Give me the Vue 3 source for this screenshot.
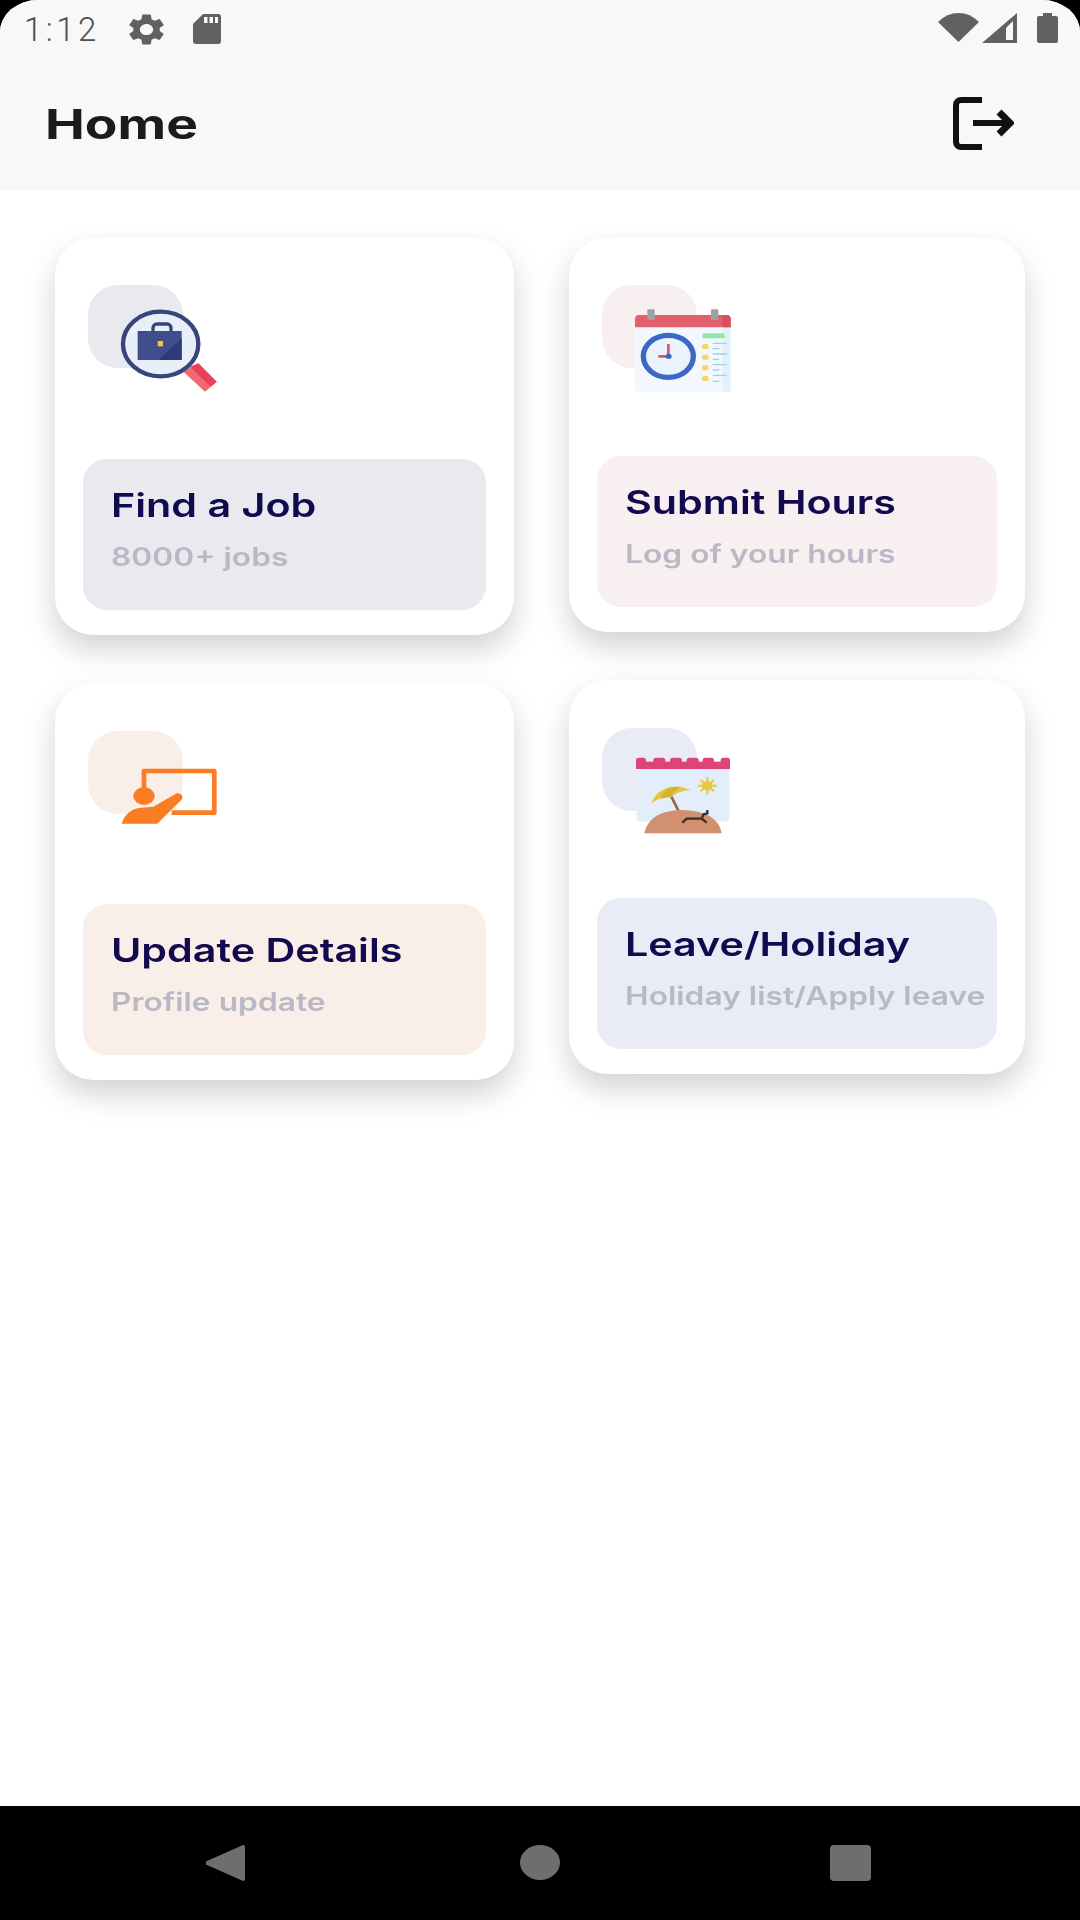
<template>
  <div class="screen">
    <div class="main">
      <div class="top-area">
        <div class="status-bar">
          <span class="time">1:12</span>
          <svg class="ic-gear" viewBox="2.5 2 19 20" preserveAspectRatio="none"><path d="M19.14 12.94c.04-.3.06-.61.06-.94 0-.32-.02-.64-.07-.94l2.03-1.58c.18-.14.23-.41.12-.61l-1.92-3.32c-.12-.22-.37-.29-.59-.22l-2.39.96c-.5-.38-1.03-.7-1.62-.94l-.36-2.54c-.04-.24-.24-.41-.48-.41h-3.84c-.24 0-.43.17-.47.41l-.36 2.54c-.59.24-1.13.57-1.62.94l-2.39-.96c-.22-.08-.47 0-.59.22L2.74 8.87c-.12.21-.08.47.12.61l2.03 1.58c-.05.3-.09.63-.09.94s.02.64.07.94l-2.03 1.58c-.18.14-.23.41-.12.61l1.92 3.32c.12.22.37.29.59.22l2.39-.96c.5.38 1.03.7 1.62.94l.36 2.54c.05.24.24.41.48.41h3.84c.24 0 .44-.17.47-.41l.36-2.54c.59-.24 1.13-.56 1.62-.94l2.39.96c.22.08.47 0 .59-.22l1.92-3.32c.12-.22.07-.47-.12-.61l-2.01-1.58zM12 15.6c-1.98 0-3.6-1.62-3.6-3.6s1.62-3.6 3.6-3.6 3.6 1.62 3.6 3.6-1.62 3.6-3.6 3.6z" fill="#616161"/></svg>
          <svg class="ic-sd" viewBox="0 0 28 30"><path d="M10 0H25a3 3 0 0 1 3 3V27a3 3 0 0 1-3 3H3a3 3 0 0 1-3-3V10Z" fill="#616161"/><path d="M11 3h3.500v6H11zM16.500 3H20v6h-3.500zM22 3h3v6h-3z" fill="#f8f8f8"/></svg>
          <span class="spacer"></span>
          <svg class="ic-wifi" viewBox="0 0 41 29"><path d="M20.500 29L0 9Q9 0 20.500 0T41 9Z" fill="#616161"/></svg>
          <svg class="ic-signal" viewBox="0 0 35 30"><path d="M35 0V30H0Z" fill="#616161"/><path d="M24 15L31 8V27H24Z" fill="#f8f8f8"/></svg>
          <svg class="ic-battery" viewBox="0 0 21 30"><path d="M6 0H15V3H19a2 2 0 0 1 2 2V28a2 2 0 0 1-2 2H2a2 2 0 0 1-2-2V5a2 2 0 0 1 2-2H6Z" fill="#616161"/></svg>
        </div>
        <div class="toolbar">
          <span class="title">Home</span>
          <svg class="ic-logout" viewBox="0 0 62 55" fill="none" stroke="#111" stroke-width="6">
            <path d="M30 3H9a5 5 0 0 0-5 5V45a5 5 0 0 0 5 5H30"/>
            <path d="M21 26H56"/>
            <path d="M47 15L58 26L47 37" stroke-width="7"/>
          </svg>
        </div>
      </div>

      <div class="columns">
        <div v-for="(col, i) in columns" :key="i" class="column" :class="'column-' + i">
          <div v-for="item in col" :key="item.title" class="card" :class="item.kind">
            <div class="head">
              <div class="tile"></div>

              <svg v-if="item.kind === 'job'" class="art" viewBox="0 0 510 420">
                <path d="M340 305L385 280L440 335L405 365Z" fill="#f26a6e"/>
                <path d="M360 290L385 280L440 335L422 350Z" fill="#e6435a"/>
                <ellipse cx="272" cy="222" rx="113" ry="97" fill="#e9eff9" stroke="#39437c" stroke-width="13"/>
                <rect x="249" y="162" width="54" height="34" rx="12" fill="none" stroke="#39437c" stroke-width="10"/>
                <rect x="203" y="183" width="132" height="87" fill="#3f4d8c"/>
                <path d="M335 270H265L335 205Z" fill="#2e3a78"/>
                <rect x="263" y="213" width="16" height="16" fill="#f2c53d"/>
              </svg>

              <svg v-else-if="item.kind === 'hours'" class="art" viewBox="0 0 510 420">
                <rect x="135" y="170" width="287" height="195" fill="#f2f8fd"/>
                <rect x="398" y="170" width="24" height="195" fill="#e2f0fa"/>
                <path d="M135 172V147a12 12 0 0 1 12-12H410a12 12 0 0 1 12 12V172Z" fill="#e2606e"/>
                <path d="M398 172V135H410a12 12 0 0 1 12 12V172Z" fill="#d94f5e"/>
                <rect x="172" y="118" width="22" height="32" rx="3" fill="#a0a0a0"/>
                <rect x="363" y="118" width="22" height="32" rx="3" fill="#a0a0a0"/>
                <ellipse cx="235" cy="259" rx="75" ry="63" fill="#eaf3fb" stroke="#3b68c4" stroke-width="16"/>
                <path d="M235 222V259M205 259H235" stroke="#e2506a" stroke-width="8" fill="none"/>
                <ellipse cx="236" cy="259" rx="9" ry="8" fill="#3b68c4"/>
                <rect x="337" y="190" width="67" height="15" rx="5" fill="#92e8a0"/>
                <g fill="#f7d568">
                  <rect x="336" y="222" width="20" height="15" rx="6"/>
                  <rect x="336" y="254" width="20" height="15" rx="6"/>
                  <rect x="336" y="286" width="20" height="15" rx="6"/>
                  <rect x="336" y="318" width="20" height="15" rx="6"/>
                </g>
                <path d="M368 220H410M368 236H388M368 252H410M368 268H388M368 284H410M368 300H388M368 316H410M368 334H388" stroke="#9fd0ef" stroke-width="4" fill="none"/>
              </svg>

              <svg v-else-if="item.kind === 'details'" class="art" viewBox="0 0 510 420">
                <path d="M222 215V165H433V290H305" fill="none" stroke="#fb7d23" stroke-width="14" stroke-linejoin="round"/>
                <ellipse cx="222" cy="240" rx="32" ry="27" fill="#fb7d23"/>
                <path d="M155 323Q165 285 205 276L250 272L320 232Q342 232 336 250L262 323Z" fill="#fb7d23"/>
              </svg>

              <svg v-else class="art" viewBox="0 0 510 420">
                <rect x="140" y="150" width="278" height="170" rx="10" fill="#e3eefb"/>
                <g fill="#dd4478">
                  <rect x="138" y="140" width="282" height="22"/>
                  <rect x="138" y="128" width="30" height="24" rx="8"/>
                  <rect x="190" y="128" width="36" height="24" rx="8"/>
                  <rect x="240" y="128" width="36" height="24" rx="8"/>
                  <rect x="290" y="128" width="36" height="24" rx="8"/>
                  <rect x="338" y="128" width="34" height="24" rx="8"/>
                  <rect x="392" y="128" width="28" height="24" rx="8"/>
                </g>
                <path d="M352 186V238M324 212H380M332 195L372 229M372 195L332 229" stroke="#e8c93c" stroke-width="6"/>
                <ellipse cx="352" cy="212" rx="16" ry="14" fill="#e8c93c"/>
                <path d="M244 245L272 300" stroke="#a0604a" stroke-width="8"/>
                <path d="M185 265C195 225 245 200 302 225Q262 228 243 246Q210 245 185 265Z" fill="#e6c63a"/>
                <path d="M212 252C218 225 240 212 272 216Q252 228 243 246Q225 246 212 252Z" fill="#d6b330"/>
                <path d="M163 355Q178 285 280 285Q385 290 395 355Z" fill="#d1906f"/>
                <path d="M277 323L290 311H335L350 323M335 311L341 298L352 295L352 285" fill="none" stroke="#3a2f2a" stroke-width="7"/>
              </svg>
            </div>
            <div class="panel">
              <div class="panel-title">{{ item.title }}</div>
              <div class="panel-sub">{{ item.sub }}</div>
            </div>
          </div>
        </div>
      </div>
    </div>

    <div class="nav-bar">
      <svg class="nav-back" viewBox="0 0 39 38"><path d="M37 1L1 17a2 2 0 0 0 0 4L37 37a2 2 0 0 0 2-2V3a2 2 0 0 0-2-2Z" fill="#6e6e6e"/></svg>
      <div class="nav-home"></div>
      <div class="nav-recent"></div>
    </div>
  </div>
</template>

<script setup>
const columns = [
  [
    { kind: 'job', title: 'Find a Job', sub: '8000+ jobs' },
    { kind: 'details', title: 'Update Details', sub: 'Profile update' },
  ],
  [
    { kind: 'hours', title: 'Submit Hours', sub: 'Log of your hours' },
    { kind: 'leave', title: 'Leave/Holiday', sub: 'Holiday list/Apply leave' },
  ],
]
</script>

<style>
html, body { margin: 0; background: #000; }
</style>

<style scoped>
.screen { width: 1080px; height: 1920px; display: flex; flex-direction: column; background: #000; overflow: hidden; font-family: Inter, "Liberation Sans", sans-serif; }
.main { flex: 1; background: #fff; border-radius: 38px 38px 0 0 / 32px 32px 0 0; overflow: hidden; }
.top-area { background: #f8f8f8; height: 190px; }

.status-bar { height: 68px; display: flex; align-items: flex-start; padding: 0 22px 0 24px; }
.time { font-family: Roboto, sans-serif; font-size: 33px; font-weight: 300; line-height: 30px; margin-top: 15px; width: 105px; letter-spacing: 3.500px; color: #4f4f4f; }
.spacer { flex: 1; }
.ic-gear { width: 35px; height: 31px; margin-top: 14px; }
.ic-sd { width: 28px; height: 30px; margin-top: 14px; margin-left: 29px; }
.ic-wifi { width: 41px; height: 29px; margin-top: 13px; }
.ic-signal { width: 35px; height: 30px; margin-top: 13px; margin-left: 3px; }
.ic-battery { width: 21px; height: 30px; margin-top: 13px; margin-left: 20px; }

.toolbar { height: 122px; display: flex; align-items: flex-start; justify-content: space-between; padding: 0 66px 0 45px; }
.title { font-size: 41px; line-height: 50px; margin-top: 31px; font-weight: 700; color: #1b1b1b; transform: scaleX(1.3); transform-origin: left center; }
.ic-logout { width: 62px; height: 55px; margin-top: 29px; }

.columns { display: flex; padding: 48px 0 0 55px; gap: 55px; }
.column { display: flex; flex-direction: column; gap: 48px; width: 459px; }
.column-1 { width: 456px; }

.card { background: #fff; border-radius: 38px; padding: 47px 28px 25px; box-shadow: 0 14px 30px rgba(0, 0, 0, 0.18); }
.details, .leave { padding-top: 48px; }
.head { position: relative; height: 174px; }
.hours .head { height: 171px; }
.details .head { height: 173px; }
.leave .head { height: 170px; }

.tile { width: 95px; height: 83px; margin-left: 5px; border-radius: 30px; }
.art { position: absolute; left: -13px; top: -15px; width: 170px; height: 140px; filter: blur(0.5px); }
.column-1 .art { left: -7px; }
.leave .art { top: -13px; }

.panel { height: 151px; box-sizing: border-box; border-radius: 24px; padding: 24px 0 0 28px; overflow: hidden; }
.panel-title { font-size: 33px; line-height: 44px; font-weight: 600; color: #120a4f; white-space: nowrap; transform: scaleX(1.25); transform-origin: left center; }
.panel-sub { font-size: 25px; line-height: 32px; margin-top: 14px; font-weight: 600; color: #b9b9c6; white-space: nowrap; transform: scaleX(1.27); transform-origin: left center; }

.job .tile, .job .panel { background: #e9eaef; }
.hours .tile, .hours .panel { background: #f8eff1; }
.details .tile, .details .panel { background: #f9efe8; }
.leave .tile, .leave .panel { background: #e9ebf6; }

.nav-bar { height: 114px; background: #000; display: flex; align-items: flex-start; }
.nav-back { width: 39px; height: 38px; margin: 38px 0 0 206px; }
.nav-home { width: 40px; height: 35px; margin: 39px 0 0 275px; border-radius: 50%; background: #6e6e6e; }
.nav-recent { width: 41px; height: 36px; margin: 39px 0 0 270px; border-radius: 4px; background: #6e6e6e; }
</style>
